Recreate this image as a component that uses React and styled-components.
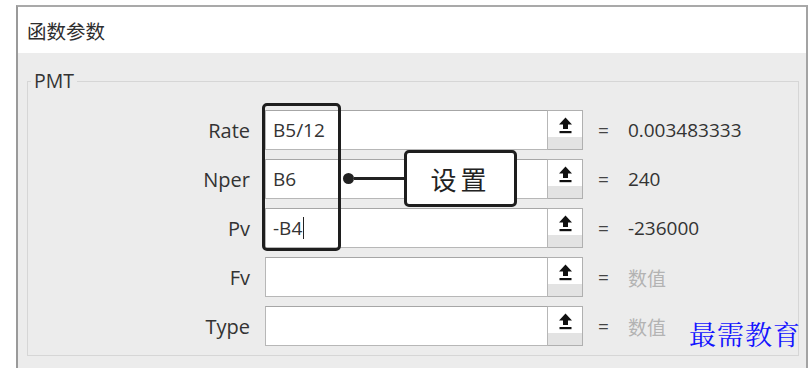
import React from 'react'
import styled, { createGlobalStyle } from 'styled-components'

const Global = createGlobalStyle`
  html, body { margin: 0; padding: 0; background: #ffffff; overflow: hidden; }
  body { font-family: "Open Sans", "Noto Sans CJK SC", sans-serif; color: #333; }
`

const Window = styled.div`
  box-sizing: border-box;
  width: 792px;
  height: 380px;
  margin: 5px 0 0 16px;
  border-top: 2px solid #a9a9a9;
  border-left: 2px solid #9a9a9a;
  border-right: 2px solid #a3a3a3;
  background: #ececec;
`

const TitleBar = styled.div`
  height: 46px;
  display: flex;
  align-items: center;
  padding-left: 9px;
  background: #fff;
  font-family: "Noto Sans CJK SC", sans-serif;
  font-size: 19.5px;
  color: #2e2e2e;
`

const Body = styled.div`
  padding: 15px 7px 0 9px;
`

const Group = styled.fieldset`
  margin: 0;
  padding: 16px 0 9px;
  border: 1px solid #d6d6d6;
  min-width: 0;
`

const Legend = styled.legend`
  margin-left: 3px;
  padding: 0 3px;
  font-size: 19.5px;
  line-height: 26px;
  color: #333;
`

const Form = styled.div`
  position: relative;
  display: grid;
  grid-template-columns: 222px 318px 1fr;
  grid-auto-rows: 40px;
  column-gap: 15px;
  row-gap: 9px;
  align-items: center;
`

const Label = styled.div`
  text-align: right;
  font-size: 20px;
  color: #333;
`

const Field = styled.div`
  display: flex;
  height: 40px;
`

const Input = styled.div`
  flex: 1;
  box-sizing: border-box;
  display: flex;
  align-items: center;
  padding-left: 7px;
  background: #fff;
  border: 1px solid #b7b7b7;
  border-top-color: #a6a6a6;
  font-size: 19px;
  color: #333;
`

const Caret = styled.span`
  display: inline-block;
  width: 1px;
  height: 22px;
  margin-left: 1px;
  background: #222;
`

const PickButton = styled.div`
  box-sizing: border-box;
  width: 35px;
  display: flex;
  justify-content: center;
  padding-top: 6px;
  border: 1px solid #b0b0b0;
  border-left: none;
  background: linear-gradient(#ffffff 0 68%, #e3e3e3 68% 100%);
`

const Result = styled.div`
  display: flex;
  align-items: center;
  gap: 19px;
  font-size: 19px;
  color: ${p => (p.muted ? '#b3b3b3' : '#333')};
  font-family: ${p => (p.muted ? '"Noto Sans CJK SC", sans-serif' : '"Open Sans", sans-serif')};
`

const Eq = styled.span`
  color: #444;
  font-family: "Open Sans", sans-serif;
`

const Highlight = styled.div`
  position: absolute;
  left: 234px;
  top: -7px;
  width: 79px;
  height: 148px;
  box-sizing: border-box;
  border: 3px solid #1e1e1e;
  border-radius: 5px;
`

const Callout = styled.div`
  position: absolute;
  left: 315px;
  top: 40px;
  height: 57px;
  display: flex;
  align-items: center;
`

const Dot = styled.span`
  width: 11px;
  height: 11px;
  border-radius: 50%;
  background: #222;
`

const Line = styled.span`
  width: 50px;
  height: 3px;
  background: #222;
`

const Note = styled.div`
  box-sizing: border-box;
  width: 113px;
  height: 57px;
  display: flex;
  align-items: center;
  justify-content: center;
  border: 3px solid #1e1e1e;
  border-radius: 5px;
  background: #fff;
  font-family: "Noto Sans CJK SC", sans-serif;
  font-size: 26px;
  letter-spacing: 4px;
  color: #222;
`

const Watermark = styled.div`
  position: absolute;
  right: -3px;
  bottom: -7px;
  font-family: "Noto Serif CJK SC", "Noto Sans CJK SC", serif;
  font-size: 27px;
  letter-spacing: 1px;
  color: #1414ff;
`

const UpArrow = () => (
  <svg width="15" height="17" viewBox="0 0 15 17">
    <path d="M7.5 0.5 L1 7.5 H5 V12 H10 V7.5 H14 Z" fill="#111" />
    <rect x="1.5" y="14" width="12" height="2.2" fill="#111" />
  </svg>
)

const rows = [
  { label: 'Rate', value: 'B5/12', result: '0.003483333' },
  { label: 'Nper', value: 'B6', result: '240' },
  { label: 'Pv', value: '-B4', result: '-236000', caret: true },
  { label: 'Fv', value: '', result: '数值', muted: true },
  { label: 'Type', value: '', result: '数值', muted: true },
]

export default function App() {
  return (
    <>
      <Global />
      <Window>
        <TitleBar>函数参数</TitleBar>
        <Body>
          <Group>
            <Legend>PMT</Legend>
            <Form>
              {rows.map(r => (
                <React.Fragment key={r.label}>
                  <Label>{r.label}</Label>
                  <Field>
                    <Input>
                      {r.value}
                      {r.caret && <Caret />}
                    </Input>
                    <PickButton>
                      <UpArrow />
                    </PickButton>
                  </Field>
                  <Result muted={r.muted}>
                    <Eq>=</Eq>
                    <span>{r.result}</span>
                  </Result>
                </React.Fragment>
              ))}
              <Highlight />
              <Callout>
                <Dot />
                <Line />
                <Note>设置</Note>
              </Callout>
              <Watermark>最需教育</Watermark>
            </Form>
          </Group>
        </Body>
      </Window>
    </>
  )
}
